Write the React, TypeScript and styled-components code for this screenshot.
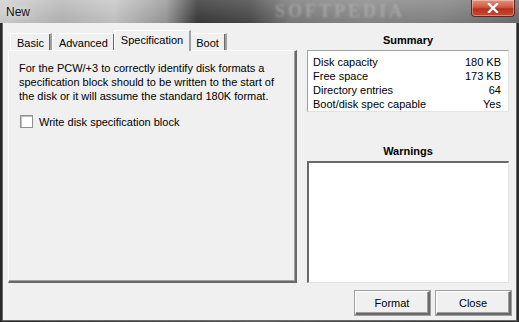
import * as React from 'react';
import styled, { createGlobalStyle } from 'styled-components';

const GlobalStyle = createGlobalStyle`
    html, body {
        margin: 0;
        padding: 0;
        background: #1e1e1e;
    }
    body {
        font-family: "Liberation Sans", Arial, sans-serif;
        font-size: 11px;
        color: #000;
    }
`;

type SummaryRow = { label: string; value: string };

const summary: SummaryRow[] = [
    { label: 'Disk capacity', value: '180 KB' },
    { label: 'Free space', value: '173 KB' },
    { label: 'Directory entries', value: '64' },
    { label: 'Boot/disk spec capable', value: 'Yes' },
];

const tabs = ['Basic', 'Advanced', 'Specification', 'Boot'];

const App = () => {
    return (
        <>
            <GlobalStyle />
            <Window>
                <TitleBar>
                    <Title>New</Title>
                    <Watermark>SOFTPEDIA</Watermark>
                    <CloseButton aria-label="Close">
                        <svg width="12" height="10" viewBox="0 0 12 10">
                            <path d="M2 1 L10 9 M10 1 L2 9" stroke="#fff" strokeWidth="2.4" strokeLinecap="square" />
                        </svg>
                    </CloseButton>
                </TitleBar>
                <Body>
                    <Main>
                        <LeftColumn>
                            <TabStrip>
                                {tabs.map((t) => (
                                    <Tab key={t} $active={t === 'Specification'}>{t}</Tab>
                                ))}
                            </TabStrip>
                            <TabPanel>
                                <Description>
                                    For the PCW/+3 to correctly identify disk formats a specification block should to be written to the start of the disk or it will assume the standard 180K format.
                                </Description>
                                <CheckRow>
                                    <CheckBox />
                                    Write disk specification block
                                </CheckRow>
                            </TabPanel>
                        </LeftColumn>
                        <RightColumn>
                            <SectionTitle>Summary</SectionTitle>
                            <SummaryBox>
                                {summary.map((r) => (
                                    <SummaryLine key={r.label}>
                                        <span>{r.label}</span>
                                        <span>{r.value}</span>
                                    </SummaryLine>
                                ))}
                            </SummaryBox>
                            <SectionTitle $spaced>Warnings</SectionTitle>
                            <WarningsBox />
                        </RightColumn>
                    </Main>
                    <Footer>
                        <DialogButton>Format</DialogButton>
                        <DialogButton>Close</DialogButton>
                    </Footer>
                </Body>
            </Window>
        </>
    );
};

export default App;

const Window = styled.div`
    width: 519px;
    height: 322px;
    display: flex;
    flex-direction: column;
    overflow: hidden;
    background: linear-gradient(90deg, #2a2a2a 0%, #5a5a5a 50%, #2a2a2a 100%);
`;

const TitleBar = styled.div`
    position: relative;
    height: 23px;
    flex: none;
    display: flex;
    align-items: center;
    padding-left: 6px;
    background:
        linear-gradient(180deg, rgba(255,255,255,0.15) 0%, rgba(0,0,0,0.05) 100%),
        linear-gradient(90deg, #d2d2d2 0%, #b8b8b8 12%, #c8c8c8 22%, #9a9a9a 32%, #3a3a3a 38%, #4a4a4a 48%, #7c7c7c 56%, #8a8a8a 70%, #858585 85%, #6e6e6e 100%);
    overflow: hidden;
`;

const Title = styled.span`
    font-family: "Liberation Sans", Arial, sans-serif;
    font-size: 12px;
    color: #111;
    text-shadow: 0 0 6px rgba(255,255,255,0.9);
`;

const Watermark = styled.span`
    position: absolute;
    left: 275px;
    top: 2px;
    font-family: "Liberation Serif", serif;
    font-weight: bold;
    font-size: 18px;
    line-height: 19px;
    letter-spacing: 3px;
    color: rgba(200, 200, 200, 0.4);
    filter: blur(1.2px);
`;

const CloseButton = styled.div`
    position: absolute;
    right: 4px;
    top: 0;
    width: 44px;
    height: 17px;
    box-sizing: border-box;
    display: flex;
    align-items: center;
    justify-content: center;
    border: 1px solid #5a2a22;
    border-top: none;
    border-radius: 0 0 4px 4px;
    background: linear-gradient(180deg, #e09080 0%, #d05a40 45%, #b8301c 55%, #c84a30 100%);
    box-shadow: inset 0 0 0 1px rgba(255,255,255,0.35);
`;

const Body = styled.div`
    flex: 1;
    margin: 0 2px 2px 2px;
    box-sizing: border-box;
    background: #f0f0f0;
    border-left: 1px solid #6a6a6a;
    border-right: 1px solid #6a6a6a;
    border-bottom: 1px solid #6a6a6a;
    padding: 7px 5px 5px 5px;
    display: flex;
    flex-direction: column;
`;

const Main = styled.div`
    display: flex;
    gap: 10px;
    height: 253px;
`;

const LeftColumn = styled.div`
    width: 289px;
    display: flex;
    flex-direction: column;
`;

const TabStrip = styled.div`
    display: flex;
    align-items: flex-end;
    height: 20px;
    padding-left: 2px;
    position: relative;
    z-index: 1;
`;

const Tab = styled.div<{ $active?: boolean }>`
    box-sizing: border-box;
    height: ${(p) => (p.$active ? '21px' : '17px')};
    padding: 2px 6px 0 6px;
    margin: ${(p) => (p.$active ? '0 -2px -1px -2px' : '0')};
    background: #f0f0f0;
    border-top: 1px solid #ffffff;
    border-left: 1px solid #ffffff;
    border-right: 2px solid #a0a0a0;
    box-shadow: ${(p) => (p.$active ? 'none' : 'inset -1px 0 0 #696969')};
    line-height: 14px;
    position: relative;
    z-index: ${(p) => (p.$active ? 2 : 1)};
`;

const TabPanel = styled.div`
    flex: 1;
    box-sizing: border-box;
    background: #f0f0f0;
    border-top: 1px solid #ffffff;
    border-left: 1px solid #ffffff;
    border-right: 2px solid #696969;
    border-bottom: 2px solid #696969;
    box-shadow: inset -1px -1px 0 #a0a0a0;
    padding: 10px 10px 0 10px;
`;

const Description = styled.p`
    margin: 0;
    line-height: 14px;
`;

const CheckRow = styled.label`
    display: flex;
    align-items: center;
    gap: 6px;
    margin-top: 12px;
    padding-left: 1px;
`;

const CheckBox = styled.span`
    width: 13px;
    height: 13px;
    box-sizing: border-box;
    background: #fff;
    border: 1px solid #8e8f8f;
    box-shadow: inset 1px 1px 0 #c0c0c0;
`;

const RightColumn = styled.div`
    flex: 1;
    display: flex;
    flex-direction: column;
    padding-top: 4px;
    padding-right: 2px;
`;

const SectionTitle = styled.div<{ $spaced?: boolean }>`
    text-align: center;
    font-weight: bold;
    font-size: 11px;
    line-height: 13px;
    margin-top: ${(p) => (p.$spaced ? '33px' : '0')};
    margin-bottom: 3px;
`;

const SummaryBox = styled.div`
    height: 62px;
    box-sizing: border-box;
    background: #fff;
    border: 1px solid #a0a0a0;
    border-right-color: #e3e3e3;
    border-bottom-color: #e3e3e3;
    padding: 4px 7px 0 5px;
    display: flex;
    flex-direction: column;
`;

const SummaryLine = styled.div`
    display: flex;
    justify-content: space-between;
    line-height: 14px;
`;

const WarningsBox = styled.div`
    flex: 1;
    box-sizing: border-box;
    background: #fff;
    border-top: 2px solid #696969;
    border-left: 2px solid #696969;
    border-right: 1px solid #e3e3e3;
    border-bottom: 1px solid #e3e3e3;
`;

const Footer = styled.div`
    display: flex;
    justify-content: flex-end;
    gap: 6px;
    margin-top: 8px;
`;

const DialogButton = styled.button`
    width: 75px;
    height: 24px;
    box-sizing: border-box;
    font-family: "Liberation Sans", Arial, sans-serif;
    font-size: 11px;
    color: #000;
    background: #f0f0f0;
    border-top: 1px solid #fff;
    border-left: 1px solid #fff;
    border-right: 2px solid #696969;
    border-bottom: 2px solid #696969;
    box-shadow: 0 0 0 1px #a0a0a0, inset -1px -1px 0 #a0a0a0;
    padding: 0;
`;
